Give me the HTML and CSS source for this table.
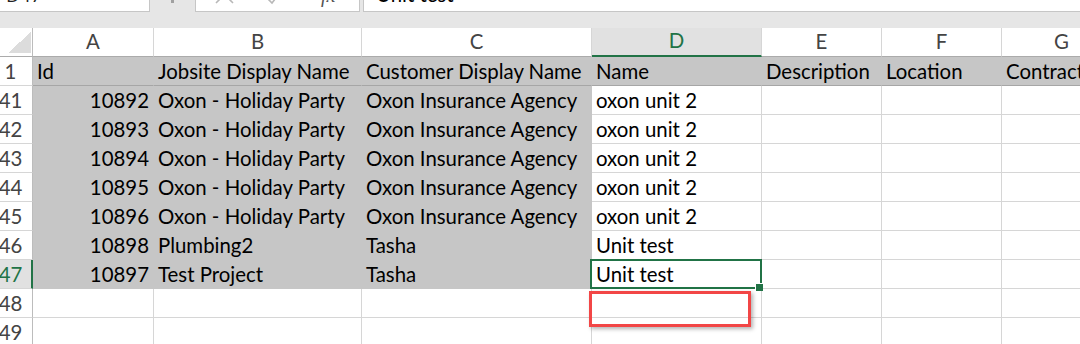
FILE: index.html
```html
<!DOCTYPE html>
<html>
<head>
<meta charset="utf-8">
<link rel="stylesheet" href="styles.css">
</head>
<body>
<div class="app">
  <div class="fbar">
    <div class="box namebox"><span class="nb-text">D47</span></div>
    <div class="dots"></div>
    <div class="box btns">
      <svg class="btn-icons" width="163" height="12" viewBox="0 0 163 12">
        <path d="M20 -14 L37 3 M37 -14 L20 3" stroke="#b8b8b8" stroke-width="1.6" fill="none"/>
        <path d="M70 -3 L76 3 L86 -10" stroke="#b8b8b8" stroke-width="1.6" fill="none"/>
        <text x="125" y="2" font-family="Liberation Serif, serif" font-style="italic" font-size="20" fill="#555">fx</text>
      </svg>
    </div>
    <div class="box formula"><span class="f-text">Unit test</span></div>
  </div>

  <div class="sheet">
    <div class="c corner"></div>
    <div class="c ch">A</div>
    <div class="c ch">B</div>
    <div class="c ch">C</div>
    <div class="c ch sel">D</div>
    <div class="c ch">E</div>
    <div class="c ch">F</div>
    <div class="c ch">G</div>

    <div class="c rh">1</div>
    <div class="c hd">Id</div>
    <div class="c hd">Jobsite Display Name</div>
    <div class="c hd">Customer Display Name</div>
    <div class="c hd">Name</div>
    <div class="c hd">Description</div>
    <div class="c hd">Location</div>
    <div class="c hd">Contract</div>

    <div class="c rh">41</div>
    <div class="c g num">10892</div>
    <div class="c g">Oxon - Holiday Party</div>
    <div class="c g">Oxon Insurance Agency</div>
    <div class="c">oxon unit 2</div>
    <div class="c"></div><div class="c"></div><div class="c"></div>

    <div class="c rh">42</div>
    <div class="c g num">10893</div>
    <div class="c g">Oxon - Holiday Party</div>
    <div class="c g">Oxon Insurance Agency</div>
    <div class="c">oxon unit 2</div>
    <div class="c"></div><div class="c"></div><div class="c"></div>

    <div class="c rh">43</div>
    <div class="c g num">10894</div>
    <div class="c g">Oxon - Holiday Party</div>
    <div class="c g">Oxon Insurance Agency</div>
    <div class="c">oxon unit 2</div>
    <div class="c"></div><div class="c"></div><div class="c"></div>

    <div class="c rh">44</div>
    <div class="c g num">10895</div>
    <div class="c g">Oxon - Holiday Party</div>
    <div class="c g">Oxon Insurance Agency</div>
    <div class="c">oxon unit 2</div>
    <div class="c"></div><div class="c"></div><div class="c"></div>

    <div class="c rh">45</div>
    <div class="c g num">10896</div>
    <div class="c g">Oxon - Holiday Party</div>
    <div class="c g">Oxon Insurance Agency</div>
    <div class="c">oxon unit 2</div>
    <div class="c"></div><div class="c"></div><div class="c"></div>

    <div class="c rh">46</div>
    <div class="c g num">10898</div>
    <div class="c g">Plumbing2</div>
    <div class="c g">Tasha</div>
    <div class="c">Unit test</div>
    <div class="c"></div><div class="c"></div><div class="c"></div>

    <div class="c rh sel">47</div>
    <div class="c g num">10897</div>
    <div class="c g">Test Project</div>
    <div class="c g">Tasha</div>
    <div class="c cur">Unit test</div>
    <div class="c"></div><div class="c"></div><div class="c"></div>

    <div class="c rh">48</div>
    <div class="c"></div>
    <div class="c"></div>
    <div class="c"></div>
    <div class="c mark"><div class="redbox"></div></div>
    <div class="c"></div><div class="c"></div><div class="c"></div>

    <div class="c rh">49</div>
    <div class="c"></div>
    <div class="c"></div>
    <div class="c"></div>
    <div class="c"></div>
    <div class="c"></div><div class="c"></div><div class="c"></div>
  </div>
</div>
</body>
</html>
```

FILE: styles.css
```css
* { box-sizing: border-box; }

body {
  margin: 0;
  background: #ffffff;
  font-family: Lato, "Liberation Sans", sans-serif;
}

.app {
  width: 1080px;
  height: 344px;
  overflow: hidden;
}

/* formula bar */
.fbar {
  height: 28px;
  background: #e6e6e6;
  display: flex;
  align-items: flex-start;
}

.box {
  height: 12px;
  background: #ffffff;
  border: 1px solid #c6c6c6;
  border-top: none;
  overflow: hidden;
}

.namebox {
  width: 150px;
  border-left: none;
}

.nb-text {
  display: block;
  font-family: "Open Sans", sans-serif;
  font-size: 19px;
  line-height: 20px;
  margin-top: -15px;
  padding-left: 6px;
  color: #222;
}

.dots {
  width: 3px;
  height: 3px;
  background: #a0a0a0;
  margin: 0 21px 0 21px;
}

.btns {
  width: 165px;
}

.btn-icons {
  display: block;
  overflow: visible;
}

.formula {
  flex: 1;
  margin-left: 3px;
  border-right: none;
}

.f-text {
  display: block;
  font-size: 20.4px;
  line-height: 20px;
  margin-top: -16px;
  padding-left: 12px;
  color: #000;
}

/* sheet */
.sheet {
  display: grid;
  grid-template-columns: 33px 121px 208px 230px 170px 120px 120px 120px;
  grid-auto-rows: 29px;
}

.c {
  border-right: 1px solid #d6d6d6;
  border-bottom: 1px solid #d6d6d6;
  padding: 0 4px;
  white-space: nowrap;
  overflow: visible;
  font-size: 20.4px;
  line-height: 28px;
  color: #000;
  display: flex;
  align-items: flex-end;
}

.corner {
  border-right-color: #bcbcbc;
  border-bottom-color: #ababab;
  background: linear-gradient(to bottom right, transparent 50%, #dcdcdc 50%) no-repeat;
  background-size: 23px 21px;
  background-position: right 1px bottom 3px;
}

.ch {
  justify-content: center;
  color: #444;
  border-bottom-color: #ababab;
  line-height: 30px;
}

.ch.sel {
  background: #e1e1e1;
  color: #217346;
  border-bottom: 2px solid #217346;
  line-height: 29px;
}

.rh {
  justify-content: center;
  padding: 0 11px 0 0;
  color: #444;
  border-right-color: #bcbcbc;
}

.rh.sel {
  background: #e1e1e1;
  color: #217346;
  border-right: 2px solid #217346;
  padding-right: 10px;
}

.hd {
  background: #c6c6c6;
  border-right-color: #c6c6c6;
  border-bottom-color: #a6a6a6;
}

.g {
  background: #c6c6c6;
  border-right-color: #c6c6c6;
  border-bottom-color: #c6c6c6;
}

.num {
  justify-content: flex-end;
}

.cur {
  position: relative;
}

.cur::after {
  content: "";
  position: absolute;
  top: -1px;
  right: -1px;
  bottom: -1px;
  left: -2px;
  border: 2px solid #217346;
}

.cur::before {
  content: "";
  position: absolute;
  right: -2px;
  bottom: -3px;
  width: 7px;
  height: 7px;
  background: #217346;
  border-top: 1px solid #fff;
  border-left: 1px solid #fff;
  z-index: 2;
}

.mark {
  position: relative;
}

.redbox {
  position: absolute;
  left: -3px;
  top: 2px;
  width: 162px;
  height: 36px;
  border: 3px solid #f24646;
  box-shadow: 2px 2px 4px rgba(0, 0, 0, 0.3);
  z-index: 3;
}
```
